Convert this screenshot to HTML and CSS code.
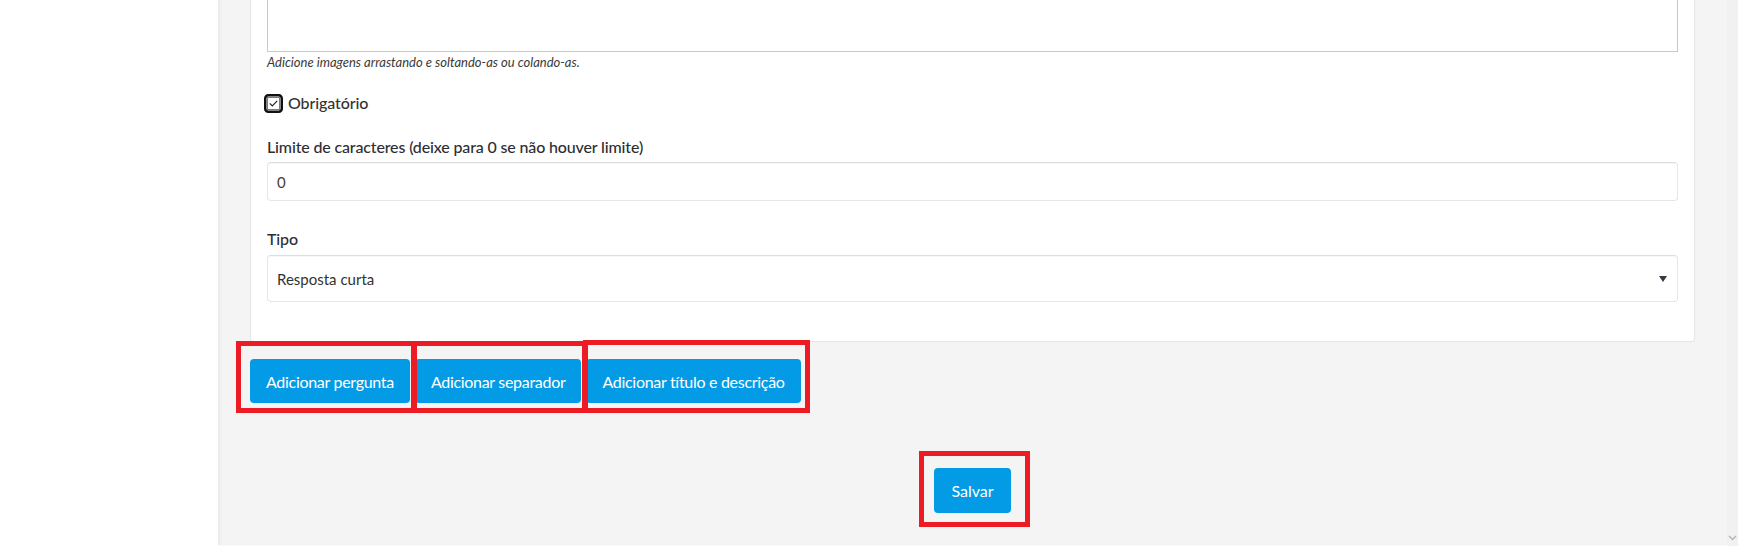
FILE: index.html
```html
<!DOCTYPE html>
<html lang="pt-BR">
<head>
<meta charset="utf-8">
<title>Formulário</title>
<link rel="stylesheet" href="styles.css">
</head>
<body>
<div class="layout">
  <aside class="sidebar"></aside>
  <main class="content">
    <section class="card">
      <div class="editor"></div>
      <p class="hint">Adicione imagens arrastando e soltando-as ou colando-as.</p>
      <label class="check">
        <span class="checkbox">
          <svg width="19" height="19" viewBox="0 0 19 19" aria-hidden="true">
            <rect x="1.25" y="1.25" width="16.5" height="16.5" rx="3" ry="3" fill="#fff" stroke="#111" stroke-width="2.5"/>
            <rect x="3.5" y="3.5" width="12" height="12" fill="#fff" stroke="#7a7a7a" stroke-width="1"/>
            <path d="M5.8 9.4 L8.3 11.9 L13.2 6.9" fill="none" stroke="#222" stroke-width="1.2"/>
          </svg>
        </span>
        <span class="check-text">Obrigatório</span>
      </label>
      <div class="field field-limit">
        <label class="field-label">Limite de caracteres (deixe para 0 se não houver limite)</label>
        <div class="input">0</div>
      </div>
      <div class="field field-type">
        <label class="field-label">Tipo</label>
        <div class="select">
          <span>Resposta curta</span>
          <span class="caret"></span>
        </div>
      </div>
    </section>
    <div class="actions">
      <button class="btn">Adicionar pergunta</button>
      <button class="btn">Adicionar separador</button>
      <button class="btn">Adicionar título e descrição</button>
    </div>
    <div class="save-row">
      <button class="btn btn-save">Salvar</button>
    </div>
    <span class="mark mark-1"></span>
    <span class="mark mark-2"></span>
    <span class="mark mark-3"></span>
    <span class="mark mark-4"></span>
  </main>
  <div class="scrollbar">
    <svg class="scroll-arrow" width="11" height="8" viewBox="0 0 11 8" aria-hidden="true">
      <path d="M2 2 L5.5 5.5 L9 2" fill="none" stroke="#b5b5b5" stroke-width="1.5"/>
    </svg>
  </div>
</div>
</body>
</html>
```

FILE: styles.css
```css
* { box-sizing: border-box; }

html, body {
  margin: 0;
  padding: 0;
  height: 100%;
  overflow: hidden;
}

body {
  font-family: "Lato", "Liberation Sans", sans-serif;
  font-size: 16px;
  color: #333;
  background: #fff;
}

.layout {
  display: flex;
  height: 546px;
}

.sidebar {
  width: 218px;
  flex: none;
  background: #fff;
}

.content {
  position: relative;
  flex: 1;
  background: #f4f4f4;
  box-shadow: inset 4px 0 4px -3px rgba(0, 0, 0, 0.07);
  border-bottom: 1px solid #fafafa;
  padding: 0 32px;
}

.card {
  background: #fff;
  border: 1px solid #e6e6e6;
  border-top: none;
  border-radius: 0 0 3px 3px;
  padding: 0 16px 39px;
}

.editor {
  height: 52px;
  border: 1px solid #c9c9c9;
  border-top: none;
  background: #fff;
}

.hint {
  margin: 1px 0 0;
  font-size: 13px;
  line-height: 18px;
  font-style: italic;
  color: #3a3a3a;
}

.check {
  display: flex;
  align-items: center;
  gap: 5px;
  margin: 22px 0 0 -3px;
  height: 20px;
  line-height: 20px;
  font-weight: 500;
  letter-spacing: -0.1px;
}

.checkbox {
  display: block;
  width: 19px;
  height: 19px;
}

.checkbox svg { display: block; }

.field-label {
  display: block;
  font-weight: 500;
  letter-spacing: -0.15px;
  line-height: 20px;
  color: #2e2e33;
}

.field-limit { margin-top: 24px; }
.field-limit .field-label { margin-bottom: 5px; }

.field-type { margin-top: 28px; }
.field-type .field-label { margin-bottom: 6px; }

.input,
.select {
  display: flex;
  align-items: center;
  background: #fff;
  border: 1px solid #e6e6e6;
  border-top-color: #dedede;
  border-radius: 4px;
  box-shadow: inset 0 1px 1px rgba(0, 0, 0, 0.03);
  padding: 0 9px;
  font-size: 15px;
  color: #333;
}

.input {
  height: 39px;
  color: #4a3a3a;
}

.select {
  height: 47px;
  justify-content: space-between;
}

.caret {
  width: 0;
  height: 0;
  border-left: 4px solid transparent;
  border-right: 4px solid transparent;
  border-top: 6px solid #333b45;
  margin-right: 1px;
}

.actions {
  display: flex;
  gap: 5px;
  margin-top: 17px;
}

.btn {
  display: inline-flex;
  align-items: center;
  justify-content: center;
  height: 44px;
  padding: 0 16px;
  border: none;
  border-radius: 4px;
  background: #039be5;
  color: #fff;
  font-family: "Lato", "Liberation Sans", sans-serif;
  font-size: 16px;
  letter-spacing: -0.3px;
  cursor: pointer;
}

.save-row {
  display: flex;
  justify-content: center;
  margin-top: 65px;
}

.btn-save {
  height: 45px;
  padding: 0 17px;
  letter-spacing: 0;
}

.mark {
  position: absolute;
  border: 5px solid #ed1c24;
  pointer-events: none;
}

.mark-1 { left: 18px;  top: 341px; width: 180px; height: 72px; }
.mark-2 { left: 194px; top: 341px; width: 175px; height: 72px; }
.mark-3 { left: 365px; top: 340px; width: 227px; height: 73px; }
.mark-4 { left: 701px; top: 451px; width: 111px; height: 76px; }

.scrollbar {
  width: 11px;
  flex: none;
  background: #f1f1f1;
  display: flex;
  flex-direction: column;
  justify-content: flex-end;
  padding-bottom: 4px;
}

.scroll-arrow { display: block; }
```
